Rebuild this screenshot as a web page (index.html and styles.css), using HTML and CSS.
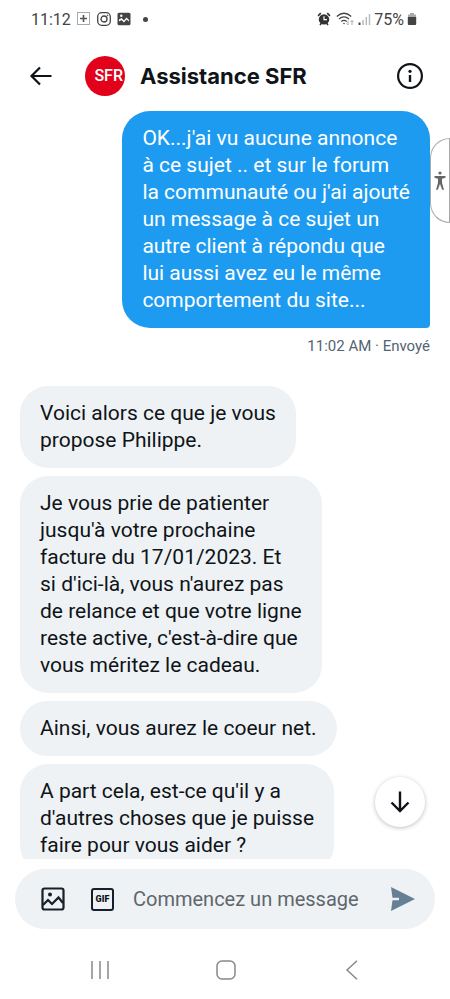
FILE: index.html
```html
<!DOCTYPE html>
<html lang="fr">
<head>
<meta charset="utf-8">
<meta name="viewport" content="width=device-width, initial-scale=1">
<title>Assistance SFR</title>
<link rel="stylesheet" href="styles.css">
</head>
<body>
<div class="phone">
  <div class="status">
    <div class="status-group">
      <span class="clock">11:12</span>
      <svg width="14" height="14" viewBox="0 0 14 14"><rect x=".5" y=".5" width="12" height="12" fill="none" stroke="#aaa"/><path d="M6.500 3v7M3 6.500h7" stroke="#555" stroke-width="1.600"/></svg>
      <svg width="14" height="14" viewBox="0 0 14 14" fill="none" stroke="#444"><rect x=".7" y=".7" width="12.600" height="12.600" rx="4" stroke-width="1.300"/><circle cx="7" cy="7" r="3" stroke-width="1.300"/><circle cx="10.600" cy="3.400" r=".5" fill="#444" stroke-width=".6"/></svg>
      <svg width="14" height="14" viewBox="0 0 14 14"><rect x=".5" y=".8" width="13" height="12.400" rx="1.500" fill="#444"/><path d="M2 9.500V7.500l2.500-1.500L7 8.500l2.500-3L12 8v1.500L9.500 7.500 7 10.500 4.500 8z" fill="#fff"/><circle cx="4.300" cy="3.800" r="1.200" fill="#fff"/></svg>
      <span class="dot"></span>
    </div>
    <div class="status-group tight">
      <svg width="14" height="14" viewBox="0 0 14 14"><circle cx="7" cy="7.400" r="5.200" fill="#333"/><path d="M1 3.800L3.800 1.200M13 3.800L10.200 1.200M3 13l1.500-2M11 13l-1.500-2" stroke="#333" stroke-width="1.600"/><path d="M7 4.300v3.400h3" fill="none" stroke="#fff" stroke-width="1.200"/></svg>
      <svg class="wifi" width="19" height="14" viewBox="0 0 19 14" fill="none" stroke="#444" stroke-width="1.300"><path d="M.8 4.500q7.200-6.400 14.400 0M3 7q5-4.200 10 0M5.300 9.500q2.700-2.200 5.400 0"/><circle cx="8" cy="11.500" r=".8" fill="#444" stroke="none"/><path d="M12 8.500v4.500M10.500 11.500l1.500 1.500M16 13V8.500M14.500 10L16 8.500l1.500 1.500" stroke="#aaa" stroke-width="1"/></svg>
      <svg width="13" height="14" viewBox="0 0 13 14"><path d="M1.500 10.500V13" stroke="#444" stroke-width="2"/><path d="M5 8v5M8.300 5v8M11.500 2v11" stroke="#bbb" stroke-width="1.500"/></svg>
      <span class="battery">75%</span>
      <svg width="10" height="14" viewBox="0 0 10 14"><path d="M3 1h4v1.500h2V6H1V2.500h2z" fill="#aaa"/><path d="M.8 5h8.400v7a1 1 0 0 1-1 1H1.800a1 1 0 0 1-1-1z" fill="#444"/></svg>
    </div>
  </div>

  <header class="header">
    <button class="icon-btn" aria-label="Retour"><svg width="24" height="24" viewBox="0 0 24 24" fill="none" stroke="#0f1419" stroke-width="2.200"><path d="M22.500 12H2.500M11 3.500L2.500 12l8.500 8.500"/></svg></button>
    <span class="avatar">SFR</span>
    <h1 class="title">Assistance SFR</h1>
    <button class="icon-btn" aria-label="Informations"><svg width="28" height="28" viewBox="0 0 28 28"><circle cx="14" cy="14" r="11.900" fill="none" stroke="#0f1419" stroke-width="2.200"/><circle cx="14" cy="9.300" r="1.600" fill="#0f1419"/><path d="M14 13v7" stroke="#0f1419" stroke-width="2.400"/></svg></button>
  </header>

  <main class="chat">
    <p class="bubble sent">OK...j'ai vu aucune annonce<br>à ce sujet .. et sur le forum<br>la communauté ou j'ai ajouté<br>un message à ce sujet un<br>autre client à répondu que<br>lui aussi avez eu le même<br>comportement du site...</p>
    <p class="meta">11:02 AM · Envoyé</p>
    <p class="bubble">Voici alors ce que je vous<br>propose Philippe.</p>
    <p class="bubble">Je vous prie de patienter<br>jusqu'à votre prochaine<br>facture du 17/01/2023. Et<br>si d'ici-là, vous n'aurez pas<br>de relance et que votre ligne<br>reste active, c'est-à-dire que<br>vous méritez le cadeau.</p>
    <p class="bubble">Ainsi, vous aurez le coeur net.</p>
    <p class="bubble">A part cela, est-ce qu'il y a<br>d'autres choses que je puisse<br>faire pour vous aider ?</p>
    <button class="scroll-down" aria-label="Derniers messages"><svg width="24" height="24" viewBox="0 0 24 24" fill="none" stroke="#0f1419" stroke-width="2.400"><path d="M12 1.500v20M3.500 12.500l8.500 8.500 8.500-8.500"/></svg></button>
  </main>

  <form class="composer">
    <button type="button" class="icon-btn" aria-label="Photo"><svg width="24" height="24" viewBox="0 0 24 24" fill="none" stroke="#16202a" stroke-width="2.200"><rect x="1.500" y="1.500" width="21" height="21" rx="2"/><path d="M2 18l5-5 4 4 6.500-6.500L22 16"/><circle cx="9" cy="7.500" r="2" fill="#16202a" stroke="none"/></svg></button>
    <button type="button" class="icon-btn" aria-label="GIF"><span class="gif">GIF</span></button>
    <input class="field" type="text" aria-label="Message" placeholder="Commencez un message">
    <button type="button" class="icon-btn" aria-label="Envoyer"><svg width="26" height="26" viewBox="0 0 26 26"><path d="M1 1l24 12L1 25l1.500-10.800H9v-2.400H2.500z" fill="#657f94"/></svg></button>
  </form>

  <nav class="navbar">
    <button class="icon-btn" aria-label="Applications récentes"><svg width="20" height="20" viewBox="0 0 20 20" stroke="#888" stroke-width="1.500"><path d="M2 1v18M10 1v18M18 1v18"/></svg></button>
    <button class="icon-btn" aria-label="Accueil"><svg width="20" height="20" viewBox="0 0 20 20"><rect x="1" y="1" width="18" height="18" rx="5" fill="none" stroke="#888" stroke-width="1.500"/></svg></button>
    <button class="icon-btn" aria-label="Précédent"><svg width="20" height="20" viewBox="0 0 20 20"><path d="M16 .8L6 10l10 9.200" fill="none" stroke="#888" stroke-width="1.500"/></svg></button>
  </nav>

  <button class="a11y" aria-label="Accessibilité"><svg width="12" height="20" viewBox="0 0 12 20"><circle cx="6" cy="2" r="1.600" fill="#666"/><path d="M.5 5h11v1.800L8 7.800v4l2 7H8.200L6 13l-2.200 5.800H2l2-7v-4L.5 6.800z" fill="#666"/></svg></button>
</div>
</body>
</html>
```
FILE: styles.css
```css
* {
  box-sizing: border-box;
}

body {
  margin: 0;
  background: #fff;
  color: #0f1419;
  font-family: Roboto, "Liberation Sans", sans-serif;
}

button {
  font: inherit;
  color: inherit;
  cursor: pointer;
}

svg {
  display: block;
  flex: none;
}

.phone {
  position: relative;
  display: flex;
  flex-direction: column;
  height: 100vh;
  overflow: hidden;
}

.status {
  display: flex;
  justify-content: space-between;
  align-items: center;
  height: 38px;
  padding: 0 33px 0 31px;
  color: #444;
  font-size: 16px;
}

.status-group {
  display: flex;
  align-items: center;
  gap: 6px;
}

.tight {
  gap: 3px;
}

.wifi {
  margin-left: 2px;
}

.dot {
  width: 5px;
  height: 5px;
  margin-left: 6px;
  border-radius: 50%;
  background: #444;
}

.icon-btn {
  display: flex;
  flex: none;
  padding: 0;
  border: 0;
  background: none;
}

.header {
  display: flex;
  align-items: center;
  height: 73px;
  padding: 2px 26px 0 29px;
}

.avatar {
  display: flex;
  align-items: center;
  justify-content: flex-end;
  width: 40px;
  height: 40px;
  margin: 0 15px 0 32px;
  padding-right: 2px;
  border-radius: 50%;
  background: #e2001a;
  color: #fff;
  font-size: 16px;
  font-weight: 500;
  overflow: hidden;
}

.title {
  flex: 1;
  margin: 0;
  font-family: Inter, Roboto, sans-serif;
  font-size: 22px;
  font-weight: 700;
}

.chat {
  position: relative;
  display: flex;
  flex: 1;
  flex-direction: column;
  align-items: flex-start;
  gap: 8px;
  min-height: 0;
  padding: 0 20px;
  overflow: hidden;
}

.bubble {
  flex: none;
  margin: 0;
  padding: 14px 20px;
  border-radius: 28px;
  background: #eef2f4;
  font-size: 21px;
  line-height: 27px;
}

.sent {
  align-self: flex-end;
  border-bottom-right-radius: 4px;
  background: #1d9bf0;
  color: #fff;
}

.meta {
  align-self: flex-end;
  margin: 0 0 22px;
  color: #536471;
  font-size: 15px;
  line-height: 20px;
}

.scroll-down {
  position: absolute;
  right: 25px;
  bottom: 32px;
  display: grid;
  place-items: center;
  width: 50px;
  height: 50px;
  border: 0;
  border-radius: 50%;
  background: #fff;
  box-shadow: 0 1px 4px rgba(0, 0, 0, 0.25);
}

.composer {
  display: flex;
  align-items: center;
  height: 60px;
  margin: 10px 15px 0;
  padding: 0 19px 0 26px;
  border-radius: 30px;
  background: #eef2f4;
}

.gif {
  display: grid;
  place-items: center;
  width: 23px;
  height: 23px;
  margin: 0 19px 0 26px;
  border: 2px solid #16202a;
  border-radius: 3px;
  font-size: 9px;
  font-weight: 900;
}

.field {
  flex: 1;
  min-width: 0;
  padding: 0;
  border: 0;
  outline: 0;
  background: none;
  color: #0f1419;
  font-family: inherit;
  font-size: 20px;
}

.field::placeholder {
  color: #5f666d;
  opacity: 1;
}

.navbar {
  display: flex;
  align-items: center;
  justify-content: space-between;
  height: 70px;
  padding: 12px 89px 0 90px;
}

.a11y {
  position: absolute;
  top: 138px;
  right: 0;
  display: grid;
  place-items: center;
  width: 20px;
  height: 85px;
  padding: 0;
  border: 1px solid #aaa;
  border-radius: 20px 0 0 20px;
  background: #fff;
}
```
